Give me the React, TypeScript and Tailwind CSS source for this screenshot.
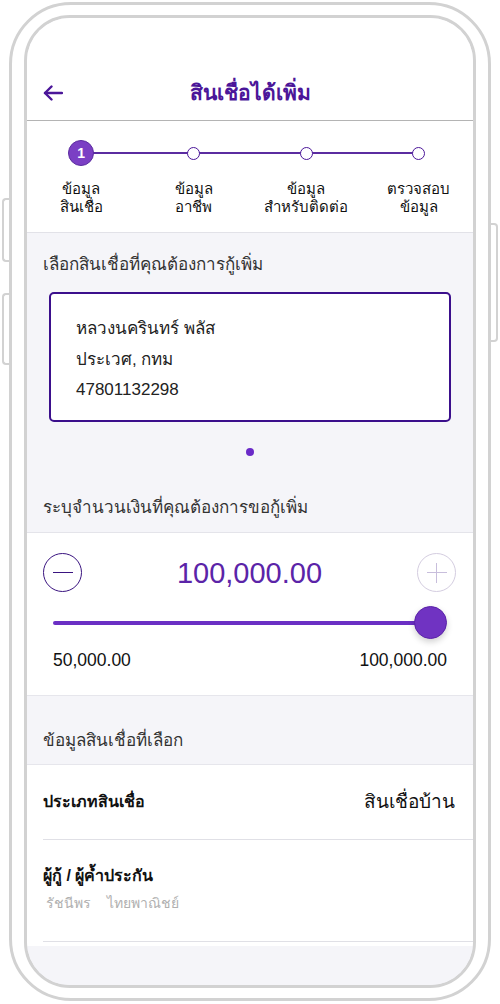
import React from "react";

const font = { fontFamily: '"Liberation Sans", "Noto Sans", sans-serif' };

function Step({ l1, l2 }: { l1: string; l2: string }) {
  return (
    <div className="flex flex-col items-center text-[15px] leading-[18px] text-[#111]">
      <span>{l1}</span>
      <span>{l2}</span>
    </div>
  );
}

export default function App() {
  return (
    <div className="relative w-[500px] h-[1004px] bg-white overflow-hidden pt-[2px] pl-[9px]" style={font}>
      {/* side buttons */}
      <div className="absolute left-[2px] top-[198px] w-[10px] h-[64px] rounded-l-[4px] border-[2px] border-r-0 border-[#d2d2d2] bg-white" />
      <div className="absolute left-[2px] top-[293px] w-[10px] h-[72px] rounded-l-[4px] border-[2px] border-r-0 border-[#d2d2d2] bg-white" />
      <div className="absolute left-[488px] top-[223px] w-[10px] h-[119px] rounded-r-[4px] border-[2px] border-l-0 border-[#d2d2d2] bg-white" />

      <div className="relative w-[482px] h-[999px] rounded-[62px] border-[3px] border-[#d2d2d2] bg-white pt-[10px] pb-[10px] px-[12px]">
        <div className="h-full w-full rounded-[46px] border-[3px] border-[#d2d2d2] overflow-hidden flex flex-col bg-[#f5f5f9]">
          {/* header */}
          <div className="h-[103px] shrink-0 bg-white border-b border-[#b4b4b4] pt-[48px] px-[16px] relative">
            <div className="h-[54px] flex items-center justify-center relative">
              <svg className="absolute left-0 top-[19px]" width="20" height="16" viewBox="0 0 20 16" fill="none" stroke="#4b1699" strokeWidth="2.4" strokeLinecap="round" strokeLinejoin="round">
                <path d="M19 8H2" />
                <path d="M8.5 1.5L2 8l6.5 6.5" />
              </svg>
              <span className="text-[21px] font-bold text-[#4b1699]">สินเชื่อได้เพิ่ม</span>
            </div>
          </div>

          {/* stepper */}
          <div className="h-[112px] shrink-0 bg-white border-b border-[#e2e2e8] pt-[19px]">
            <div className="relative -mx-[2px]">
              <div className="absolute left-[12.5%] right-[12.5%] top-[12px] h-[1.5px] bg-[#5b2ca0]" />
              <div className="grid grid-cols-4 relative">
                <div className="flex justify-center">
                  <div className="w-[26px] h-[26px] rounded-full bg-[#7b3fc4] border border-[#5b2ca0] text-white text-[14px] font-bold flex items-center justify-center">1</div>
                </div>
                <div className="flex justify-center items-center h-[26px]">
                  <div className="w-[13px] h-[13px] rounded-full bg-white border-[1.5px] border-[#4b1699]" />
                </div>
                <div className="flex justify-center items-center h-[26px]">
                  <div className="w-[13px] h-[13px] rounded-full bg-white border-[1.5px] border-[#4b1699]" />
                </div>
                <div className="flex justify-center items-center h-[26px]">
                  <div className="w-[13px] h-[13px] rounded-full bg-white border-[1.5px] border-[#4b1699]" />
                </div>
              </div>
              <div className="grid grid-cols-4 mt-[14px]">
                <Step l1="ข้อมูล" l2="สินเชื่อ" />
                <Step l1="ข้อมูล" l2="อาชีพ" />
                <Step l1="ข้อมูล" l2="สำหรับติดต่อ" />
                <Step l1="ตรวจสอบ" l2="ข้อมูล" />
              </div>
            </div>
          </div>

          {/* select loan */}
          <div className="shrink-0 bg-[#f5f5f9] pt-[20px] pb-[12px]">
            <div className="px-[16px] text-[17px] leading-[24px] text-[#333]">เลือกสินเชื่อที่คุณต้องการกู้เพิ่ม</div>
            <div className="mx-[22px] mt-[15px] h-[130px] rounded-[5px] border-2 border-[#3b0f8c] bg-white pl-[25px] pt-[20px] flex flex-col text-[17px] leading-[30.5px] text-[#222]">
              <span>หลวงนครินทร์ พลัส</span>
              <span>ประเวศ, กทม</span>
              <span>47801132298</span>
            </div>
            <div className="flex justify-center mt-[26px]">
              <div className="w-[8px] h-[8px] rounded-full bg-[#6a2ac8]" />
            </div>
            <div className="px-[16px] mt-[40px] text-[17px] leading-[24px] text-[#333]">ระบุจำนวนเงินที่คุณต้องการขอกู้เพิ่ม</div>
          </div>

          {/* amount */}
          <div className="shrink-0 bg-white border-t border-[#e4e4ea] pt-[20px] pb-[24px]">
            <div className="flex items-center justify-between pl-[16px] pr-[17px]">
              <div className="w-[39px] h-[39px] rounded-full border-[1.5px] border-[#3a1480] flex items-center justify-center">
                <div className="w-[20px] h-[1.5px] bg-[#3a1480]" />
              </div>
              <span className="text-[29px] leading-[38px] text-[#5b24a8]">100,000.00</span>
              <div className="w-[39px] h-[39px] rounded-full border-[1.5px] border-[#d4cde0] flex items-center justify-center relative">
                <div className="w-[20px] h-[1.5px] bg-[#c8bedc]" />
                <div className="absolute w-[1.5px] h-[20px] bg-[#c8bedc]" />
              </div>
            </div>
            <div className="px-[26px] mt-[14px]">
              <div className="relative h-[34px] flex items-center">
                <div className="w-full h-[4px] rounded-full bg-[#6b2fc4] mr-[8px]" />
                <div className="absolute right-0 top-0 w-[33px] h-[33px] rounded-full bg-[#7033c2] border border-[#5a22a8] shadow-[0_3px_6px_rgba(0,0,0,0.18)]" />
              </div>
              <div className="mt-[9px] flex justify-between text-[17.5px] leading-[22px] text-[#111]">
                <span>50,000.00</span>
                <span>100,000.00</span>
              </div>
            </div>
          </div>

          {/* selected info heading */}
          <div className="shrink-0 bg-[#f5f5f9] border-t border-[#e6e6ec] pt-[33px] pb-[11px] px-[16px] text-[17px] leading-[24px] text-[#333]">
            ข้อมูลสินเชื่อที่เลือก
          </div>

          {/* rows */}
          <div className="shrink-0 bg-white border-t border-[#e6e6ec] pb-[4px]">
            <div className="ml-[16px] h-[75px] border-b border-[#e0e0e6] flex items-center justify-between pr-[18px]">
              <span className="text-[16px] font-bold text-[#111]">ประเภทสินเชื่อ</span>
              <span className="text-[19px] text-[#111]">สินเชื่อบ้าน</span>
            </div>
            <div className="ml-[16px] h-[102px] border-b border-[#e0e0e6] pt-[25px]">
              <div className="text-[16px] leading-[22px] font-bold text-[#111]">ผู้กู้ / ผู้ค้ำประกัน</div>
              <div className="mt-[7px] text-[14px] leading-[18px] text-[#b0b0b0] pl-[3px] flex gap-[16px]">
                <span>รัชนีพร</span>
                <span>ไทยพาณิชย์</span>
              </div>
            </div>
          </div>

          <div className="flex-1 bg-[#f5f5f9]" />
        </div>
      </div>
    </div>
  );
}
